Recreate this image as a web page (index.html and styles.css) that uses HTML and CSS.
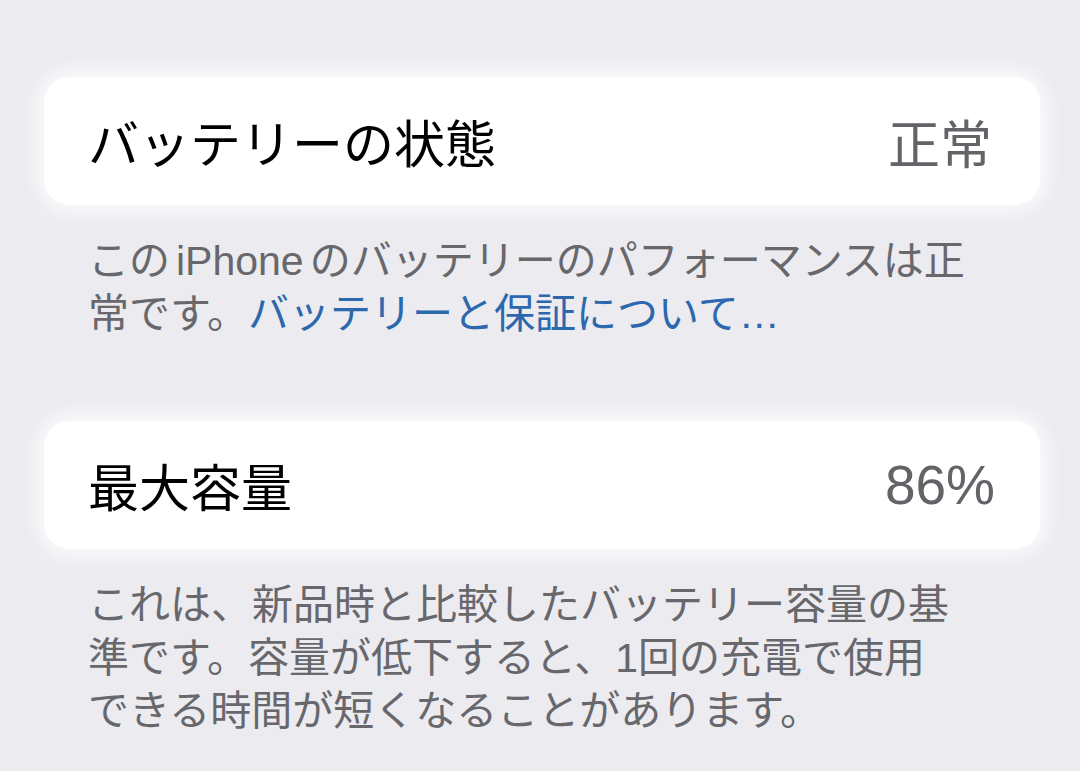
FILE: index.html
```html
<!DOCTYPE html>
<html>
    <head>
        <title>バッテリーの状態と充電</title>
        <meta charset="utf-8">
        <link rel="stylesheet" href="styles.css">
    </head>

    <body>
        <!--Battery health group-->
        <div class="GROUP">
            <div class="CELL">
                <span class="CELL_TITLE">バッテリーの状態</span>
                <span class="CELL_VALUE">正常</span>
            </div>
            <div class="GROUP_FOOTER">
                この<span class="FOOTER_LATIN">iPhone</span>のバッテリーのパフォーマンスは正<br>
                常です。<a class="FOOTER_LINK" href="#">バッテリーと保証について…</a>
            </div>
        </div>

        <!--Maximum capacity group-->
        <div class="GROUP">
            <div class="CELL">
                <span class="CELL_TITLE">最大容量</span>
                <span class="CELL_VALUE CELL_NUMBER">86%</span>
            </div>
            <div class="GROUP_FOOTER">
                これは、新品時と比較したバッテリー容量の基<br>
                準です。容量が低下すると、1回の充電で使用<br>
                できる時間が短くなることがあります。
            </div>
        </div>
    </body>
</html>
```

FILE: styles.css
```css
/*Grouped background: #EBEBF0*/
/*Secondary label gray: #67676C*/
body {
    margin: 0;
    padding-top: 77px;
    background-color: #EBEBF0;
    font-family: "Liberation Sans", "Noto Sans CJK JP", sans-serif;
}
.GROUP {
    margin: 0 40px 80px 44px;
}
.GROUP:last-child {
    margin-bottom: 0;
}
/*White rounded cell with a soft edge*/
.CELL {
    display: flex;
    align-items: center;
    justify-content: space-between;
    height: 128px;
    padding: 0 48px 0 44px;
    background-color: #FFFFFF;
    border-radius: 26px;
    box-shadow: 0 0 20px 8px rgba(255, 255, 255, 0.8);
}
.CELL_TITLE {
    font-size: 51px;
    color: #000000;
}
.CELL_VALUE {
    font-size: 52px;
    color: #636368;
}
.CELL_NUMBER {
    font-size: 55px;
    margin-right: -3px;
}
/*Explanation text under each cell*/
.GROUP_FOOTER {
    padding: 30px 0 0 44px;
    font-size: 41px;
    line-height: 53px;
    color: #67676C;
    white-space: nowrap;
}
.FOOTER_LATIN {
    margin: 0 6px;
}
.FOOTER_LINK {
    color: #2C68AD;
    text-decoration: none;
}
```
